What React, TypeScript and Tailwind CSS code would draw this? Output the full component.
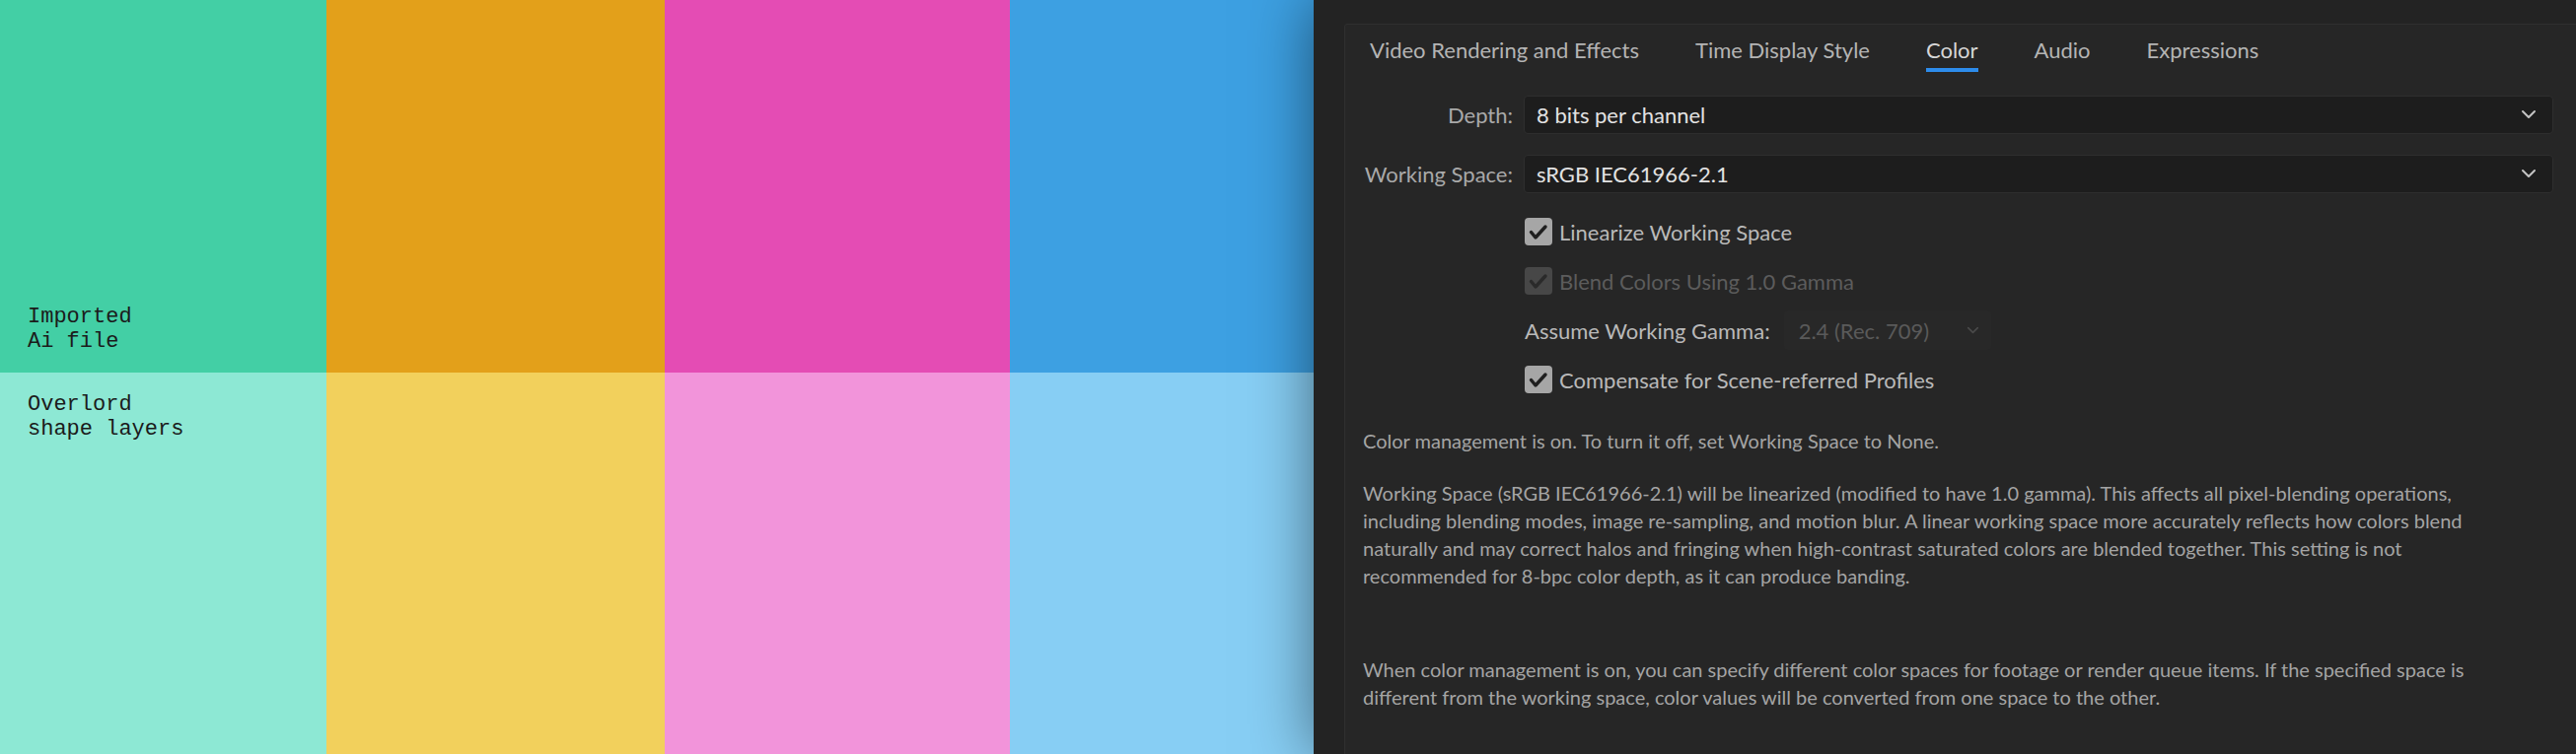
const TOP = ["bg-[#43cfa5]", "bg-[#e3a01a]", "bg-[#e44cb4]", "bg-[#3da0e2]"];
const BOTTOM = ["bg-[#8de8d4]", "bg-[#f2d05c]", "bg-[#f294da]", "bg-[#87cef4]"];

const TABS = ["Video Rendering and Effects", "Time Display Style", "Color", "Audio", "Expressions"];

function Chevron({ className }: { className?: string }) {
  return (
    <svg viewBox="0 0 16 10" className={className} fill="none">
      <path d="M2 2l6 6 6-6" stroke="currentColor" strokeWidth="2" strokeLinecap="round" strokeLinejoin="round" />
    </svg>
  );
}

function Box({ checked = true, disabled = false, label }: { checked?: boolean; disabled?: boolean; label: string }) {
  return (
    <div className="flex h-[50px] items-center gap-[7px]">
      <span
        className={
          "flex h-[28px] w-[28px] items-center justify-center rounded-[4px] " +
          (disabled ? "bg-[#474747] text-[#2a2a2a]" : "bg-[#a6a6a6] text-[#1f1f1f]")
        }
      >
        {checked && (
          <svg viewBox="0 0 28 28" className="h-[28px] w-[28px]" fill="none">
            <path d="M6.5 14.5l4.5 5.5 10-11" stroke="currentColor" strokeWidth="3.4" strokeLinecap="round" strokeLinejoin="round" />
          </svg>
        )}
      </span>
      <span className={disabled ? "text-[#5c5c5c]" : "text-[#b9b9b9]"}>{label}</span>
    </div>
  );
}

function Select({ value }: { value: string }) {
  return (
    <div className="flex h-[39px] w-[1044px] items-center justify-between rounded-[4px] border border-[#2e2e2e] bg-[#1d1d1d] pl-[12px] pr-[16px] text-[#e2e2e2]">
      <span>{value}</span>
      <Chevron className="h-[10px] w-[16px] text-[#c4c4c4]" />
    </div>
  );
}

export default function App() {
  return (
    <div className="flex h-[765px] w-[2612px] overflow-hidden bg-[#232323]">
      <div className="grid shrink-0 grid-cols-[331px_343px_350px_308px] grid-rows-[378px_387px]">
        {TOP.map((c, i) => (
          <div key={c} className={c + " flex items-end pb-[19px] pl-[28px]"}>
            {i === 0 && (
              <p className="font-['Liberation_Mono',monospace] text-[22px] leading-[25px] text-[#1b1b1b]">
                Imported
                <br />
                Ai file
              </p>
            )}
          </div>
        ))}
        {BOTTOM.map((c, i) => (
          <div key={c} className={c + " pl-[28px] pt-[20px]"}>
            {i === 0 && (
              <p className="font-['Liberation_Mono',monospace] text-[22px] leading-[25px] text-[#1b1b1b]">
                Overlord
                <br />
                shape layers
              </p>
            )}
          </div>
        ))}
      </div>

      <div className="relative z-10 flex-1 bg-[#232323] pl-[31px] pt-[24px] shadow-[0_0_60px_rgba(0,0,0,0.5)] font-['Lato',sans-serif]">
        <div className="h-[800px] w-[1300px] rounded-[3px] border border-[#2f2f2f] bg-[#262626]">
          {/* tabs */}
          <div className="flex gap-[57px] pl-[25px] pt-[11px] text-[22px] leading-[30px]">
            {TABS.map((t) => (
              <div key={t} className="flex flex-col">
                <span className={t === "Color" ? "text-[#d6d6d6]" : "text-[#b4b4b4]"}>{t}</span>
                <span className={"mt-[3px] h-[4px] " + (t === "Color" ? "bg-[#2d8ceb]" : "")} />
              </div>
            ))}
          </div>

          {/* settings */}
          <div className="mt-[13px] grid grid-cols-[170px_auto] items-center gap-x-[11px] text-[22px]">
            <div className="flex h-[60px] items-center justify-end text-[#a9a9a9]">Depth:</div>
            <Select value="8 bits per channel" />
            <div className="flex h-[60px] items-center justify-end text-[#a9a9a9]">Working Space:</div>
            <Select value="sRGB IEC61966-2.1" />
          </div>

          <div className="mt-[4px] flex flex-col pl-[182px] text-[22px]">
            <Box label="Linearize Working Space" />
            <Box disabled label="Blend Colors Using 1.0 Gamma" />
            <div className="flex h-[50px] items-center gap-[14px]">
              <span className="text-[#b9b9b9]">Assume Working Gamma:</span>
              <div className="flex h-[40px] w-[210px] items-center justify-between rounded-[4px] bg-[#282828] pl-[15px] pr-[12px] text-[#5a5a5a]">
                <span>2.4 (Rec. 709)</span>
                <Chevron className="h-[8px] w-[13px] text-[#4a4a4a]" />
              </div>
            </div>
            <Box label="Compensate for Scene-referred Profiles" />
          </div>

          {/* notes */}
          <div className="mt-[23px] pl-[18px] text-[20px] leading-[28px] text-[#a4a4a4]">
            <p>Color management is on. To turn it off, set Working Space to None.</p>
            <p className="mt-[25px]">
              Working Space (sRGB IEC61966-2.1) will be linearized (modified to have 1.0 gamma). This affects all pixel-blending operations,
              <br />
              including blending modes, image re-sampling, and motion blur. A linear working space more accurately reflects how colors blend
              <br />
              naturally and may correct halos and fringing when high-contrast saturated colors are blended together. This setting is not
              <br />
              recommended for 8-bpc color depth, as it can produce banding.
            </p>
            <p className="mt-[67px]">
              When color management is on, you can specify different color spaces for footage or render queue items. If the specified space is
              <br />
              different from the working space, color values will be converted from one space to the other.
            </p>
          </div>
        </div>
      </div>
    </div>
  );
}
